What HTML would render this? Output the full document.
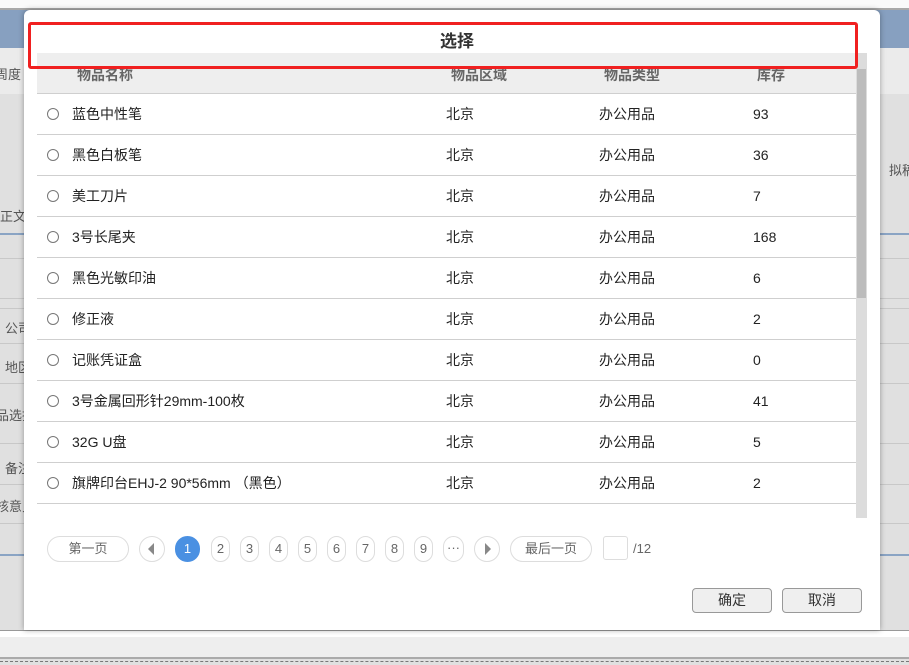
<!DOCTYPE html>
<html><head><meta charset="utf-8"><style>
*{margin:0;padding:0;box-sizing:border-box}
body{width:909px;height:665px;overflow:hidden;position:relative;background:#e0e0e0;font-family:"Liberation Sans","Noto Sans CJK SC",sans-serif;font-size:14px;color:#222}
.a{position:absolute;white-space:nowrap}
.hl{position:absolute;left:0;width:909px;height:1px;background:#c8c8c8}
.modal{position:absolute;left:24px;top:10px;width:856px;height:620px;background:#fff;border-radius:6px 6px 0 0;box-shadow:0 0 6px rgba(0,0,0,.35)}
.row{position:absolute;left:13px;width:819px;height:41px;border-bottom:1px solid #cfcfcf}
.row span{position:absolute;top:12px;line-height:16px;font-size:14px;white-space:nowrap}
.rad{position:absolute;left:10px;top:14px;width:12px;height:12px;border:1px solid #777;border-radius:50%}
.pg{position:absolute;top:526px;height:26px;border:1px solid #ddd;border-radius:13px;font-size:13px;color:#666;text-align:center;line-height:24px;background:#fff}
.btn{position:absolute;top:578px;width:80px;height:25px;border:1px solid #999;border-radius:4px;background:#efefef;text-align:center;line-height:23px;font-size:14px;color:#333}
</style></head><body>
<div class="a" style="left:0;top:0;width:909px;height:8px;background:#fafafa"></div>
<div class="a" style="left:0;top:8px;width:909px;height:2px;background:#a9a9a9"></div>
<div class="a" style="left:0;top:10px;width:909px;height:38px;background:#87a0c0"></div>
<div class="a" style="left:0;top:48px;width:909px;height:46px;background:#ebebeb"></div>
<div class="a" style="left:-5px;top:64px;font-size:13px;color:#555">周度</div>
<div class="a" style="left:889px;top:160px;font-size:13px;color:#555">拟稿</div>
<div class="a" style="left:0;top:206px;font-size:13px;color:#555">正文</div>
<div class="a" style="left:0;top:233px;width:909px;height:2px;background:#8aa4c4"></div>
<div class="hl" style="top:258px"></div><div class="hl" style="top:298px"></div><div class="hl" style="top:308px"></div>
<div class="a" style="left:5px;top:318px;font-size:13px;color:#555">公司</div>
<div class="hl" style="top:343px"></div>
<div class="a" style="left:5px;top:357px;font-size:13px;color:#555">地区</div>
<div class="hl" style="top:383px"></div>
<div class="a" style="left:-4px;top:405px;font-size:13px;color:#555">品选择</div>
<div class="hl" style="top:443px"></div>
<div class="a" style="left:5px;top:458px;font-size:13px;color:#555">备注</div>
<div class="hl" style="top:484px"></div>
<div class="a" style="left:-4px;top:496px;font-size:13px;color:#555">核意见</div>
<div class="hl" style="top:523px"></div>
<div class="a" style="left:0;top:554px;width:909px;height:2px;background:#8aa4c4"></div>
<div class="a" style="left:0;top:630px;width:909px;height:1px;background:#999"></div>
<div class="a" style="left:0;top:631px;width:909px;height:6px;background:#fff"></div>
<div class="a" style="left:0;top:637px;width:909px;height:20px;background:#eee"></div>
<div class="a" style="left:0;top:657px;width:909px;height:2px;background:#aaa"></div>
<div class="a" style="left:0;top:661px;width:909px;border-top:1px dashed #777"></div>

<div class="modal">
 <div class="a" style="left:17px;top:17px;width:832px;text-align:center;font-size:17px;font-weight:bold;color:#333">选择</div>
 <div class="a" style="left:13px;top:43px;width:819px;height:41px;background:#eee;border-bottom:1px solid #cfcfcf"></div>
 <div class="a" style="left:53px;top:55px;font-size:14px;color:#666;font-weight:bold">物品名称</div>
 <div class="a" style="left:427px;top:55px;font-size:14px;color:#666;font-weight:bold">物品区域</div>
 <div class="a" style="left:580px;top:55px;font-size:14px;color:#666;font-weight:bold">物品类型</div>
 <div class="a" style="left:733px;top:55px;font-size:14px;color:#666;font-weight:bold">库存</div>
 <div class="a" style="left:832px;top:43px;width:11px;height:465px;background:#dcdcdc"></div>
 <div class="a" style="left:833px;top:59px;width:9px;height:229px;background:#bcbcbc"></div>

 <div class="row" style="top:84px"><i class="rad"></i><span style="left:35px">蓝色中性笔</span><span style="left:409px">北京</span><span style="left:562px">办公用品</span><span style="left:716px">93</span></div>
 <div class="row" style="top:125px"><i class="rad"></i><span style="left:35px">黑色白板笔</span><span style="left:409px">北京</span><span style="left:562px">办公用品</span><span style="left:716px">36</span></div>
 <div class="row" style="top:166px"><i class="rad"></i><span style="left:35px">美工刀片</span><span style="left:409px">北京</span><span style="left:562px">办公用品</span><span style="left:716px">7</span></div>
 <div class="row" style="top:207px"><i class="rad"></i><span style="left:35px">3号长尾夹</span><span style="left:409px">北京</span><span style="left:562px">办公用品</span><span style="left:716px">168</span></div>
 <div class="row" style="top:248px"><i class="rad"></i><span style="left:35px">黑色光敏印油</span><span style="left:409px">北京</span><span style="left:562px">办公用品</span><span style="left:716px">6</span></div>
 <div class="row" style="top:289px"><i class="rad"></i><span style="left:35px">修正液</span><span style="left:409px">北京</span><span style="left:562px">办公用品</span><span style="left:716px">2</span></div>
 <div class="row" style="top:330px"><i class="rad"></i><span style="left:35px">记账凭证盒</span><span style="left:409px">北京</span><span style="left:562px">办公用品</span><span style="left:716px">0</span></div>
 <div class="row" style="top:371px"><i class="rad"></i><span style="left:35px">3号金属回形针29mm-100枚</span><span style="left:409px">北京</span><span style="left:562px">办公用品</span><span style="left:716px">41</span></div>
 <div class="row" style="top:412px"><i class="rad"></i><span style="left:35px">32G U盘</span><span style="left:409px">北京</span><span style="left:562px">办公用品</span><span style="left:716px">5</span></div>
 <div class="row" style="top:453px"><i class="rad"></i><span style="left:35px">旗牌印台EHJ-2 90*56mm （黑色）</span><span style="left:409px">北京</span><span style="left:562px">办公用品</span><span style="left:716px">2</span></div>

 <div class="pg" style="left:23px;width:82px">第一页</div>
 <div class="pg" style="left:115px;width:26px"><svg width="24" height="24" style="position:absolute;left:0;top:0"><path d="M14 6 L8 12 L14 18Z" fill="#888"/></svg></div>
 <div class="pg" style="left:151px;width:25px;background:#4a90e2;border-color:#4a90e2;color:#fff">1</div>
 <div class="pg" style="left:187px;width:19px;border-radius:10px">2</div>
 <div class="pg" style="left:216px;width:19px;border-radius:10px">3</div>
 <div class="pg" style="left:245px;width:19px;border-radius:10px">4</div>
 <div class="pg" style="left:274px;width:19px;border-radius:10px">5</div>
 <div class="pg" style="left:303px;width:19px;border-radius:10px">6</div>
 <div class="pg" style="left:332px;width:19px;border-radius:10px">7</div>
 <div class="pg" style="left:361px;width:19px;border-radius:10px">8</div>
 <div class="pg" style="left:390px;width:19px;border-radius:10px">9</div>
 <div class="pg" style="left:419px;width:21px;line-height:22px">···</div>
 <div class="pg" style="left:450px;width:26px"><svg width="24" height="24" style="position:absolute;left:0;top:0"><path d="M10 6 L16 12 L10 18Z" fill="#888"/></svg></div>
 <div class="pg" style="left:486px;width:82px">最后一页</div>
 <div class="a" style="left:579px;top:526px;width:25px;height:24px;border:1px solid #ddd;border-radius:3px"></div>
 <div class="a" style="left:609px;top:531px;font-size:13px;color:#666">/12</div>
 <div class="btn" style="left:668px">确定</div>
 <div class="btn" style="left:758px">取消</div>
 <div class="a" style="left:4px;top:12px;width:830px;height:47px;border:3px solid #f02020;border-radius:3px"></div>
</div>
</body></html>
